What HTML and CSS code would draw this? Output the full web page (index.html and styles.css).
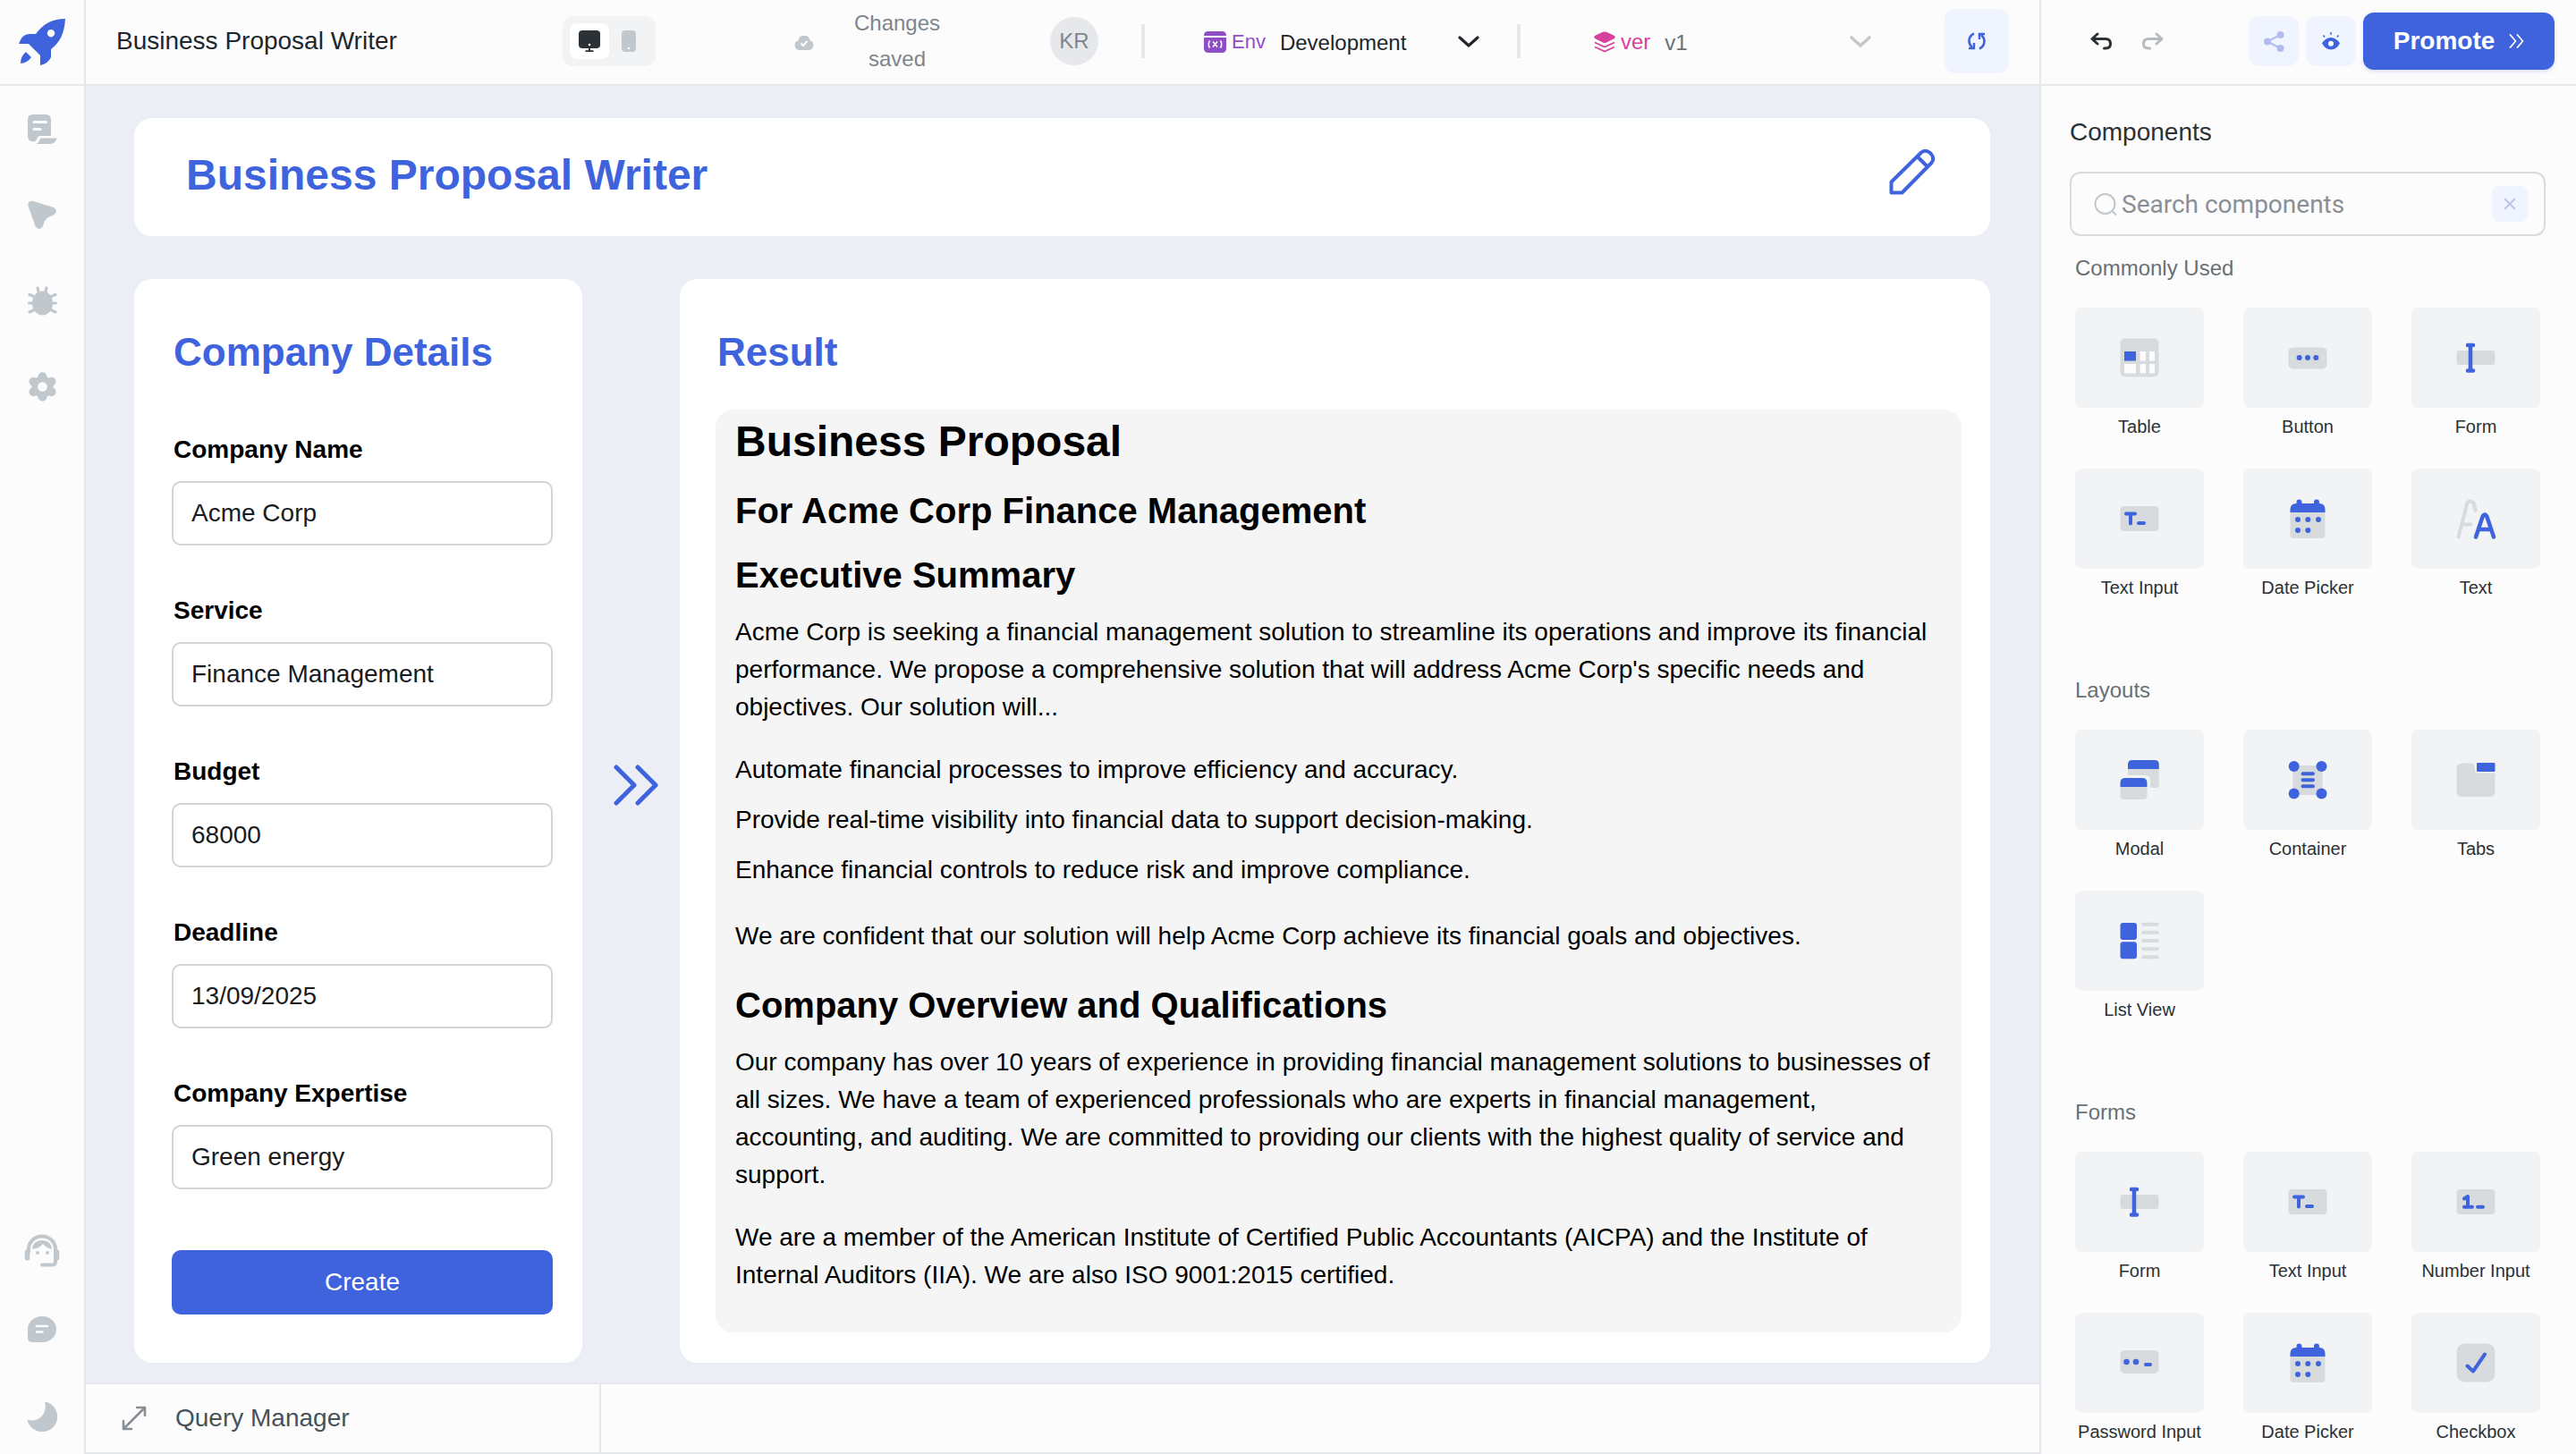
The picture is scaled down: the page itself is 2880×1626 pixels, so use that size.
FILE: index.html
```html
<!DOCTYPE html>
<html lang="en">
<head>
<meta charset="utf-8">
<meta name="viewport" content="width=device-width, initial-scale=1">
<title>Business Proposal Writer</title>
<link rel="stylesheet" href="styles.css">
</head>
<body>
<svg class="sprite" aria-hidden="true">
  <symbol id="c-table" viewBox="0 0 48 48"><rect class="g" x="2.5" y="2.5" width="43" height="43" rx="5"/><path class="w" d="M7 31h13v10.500H7zM24.500 17H31v10.500h-6.500zM35 17h6v10.500h-6zM24.500 31H31v10.500h-6.500zM35 31h6v10.500h-6z"/><rect class="b" x="7" y="17" width="13" height="10.500"/></symbol>
  <symbol id="c-button" viewBox="0 0 48 48"><rect class="g" x="2.500" y="12.500" width="43" height="24" rx="5"/><circle class="b" cx="14.700" cy="24" r="3"/><circle class="b" cx="24" cy="24" r="3"/><circle class="b" cx="33.300" cy="24" r="3"/></symbol>
  <symbol id="c-form" viewBox="0 0 48 48"><rect class="g" x="2.500" y="16" width="43" height="16" rx="3"/><path class="l" d="M18 10v28M15 10h6M15 38.500h6"/></symbol>
  <symbol id="c-input" viewBox="0 0 48 48"><rect class="g" x="2.500" y="10" width="43" height="28" rx="4"/><path class="l n" d="M9 18.500h10M14 18.500v11M23 29h6"/></symbol>
  <symbol id="c-number" viewBox="0 0 48 48"><rect class="g" x="2.500" y="10" width="43" height="28" rx="4"/><path class="l n" d="M11 20.500l4-2.500v11.500M11 29.800h9M26 29.800h6"/></symbol>
  <symbol id="c-password" viewBox="0 0 48 48"><rect class="g" x="2.500" y="10" width="43" height="26" rx="5"/><circle class="b" cx="9.500" cy="23" r="3.300"/><circle class="b" cx="20" cy="23" r="3.300"/><path class="l n" d="M31 26h5"/></symbol>
  <symbol id="c-date" viewBox="0 0 48 48"><rect class="g" x="4.500" y="12" width="39" height="34" rx="4"/><path class="b" d="M4.500 17v-3q0-7 7-7V5.500a3 3 0 0 1 6 0V7h13.500V5.500a3 3 0 0 1 6 0V7q6.500 0 6.500 7v3z"/><circle class="b" cx="13" cy="25" r="3"/><circle class="b" cx="24.300" cy="25" r="3"/><circle class="b" cx="36" cy="25" r="3"/><circle class="b" cx="13" cy="37" r="3"/><circle class="b" cx="24.300" cy="37" r="3"/></symbol>
  <symbol id="c-text" viewBox="0 0 48 48"><path class="gl" d="M4.500 44.500L14 8q1-3.500 4-3.500t4 3.500l1.500 7M9.500 30.500h9"/><path class="l" d="M24 44.500L31.500 22q2.500-5 5 0L44 44.500M28 36h12"/></symbol>
  <symbol id="c-modal" viewBox="0 0 48 48"><path class="g" d="M11 12h34.800v18q0 3-3 3H36V25q0-6-6-6H11z"/><path class="b" d="M11 12V7q0-5 5-5h25q4.800 0 4.800 5v5z"/><path class="g" d="M2.500 32h30v10q0 4-4 4h-22q-4 0-4-4z"/><path class="b" d="M2.500 32v-4.500Q2.500 22 8 22h19q5.500 0 5.500 5.500V32z"/></symbol>
  <symbol id="c-container" viewBox="0 0 48 48"><rect class="g" x="7.500" y="8" width="33" height="33" rx="2"/><circle class="b" cx="8.700" cy="9" r="6"/><circle class="b" cx="39.500" cy="9" r="6"/><circle class="b" cx="8.700" cy="39.500" r="6"/><circle class="b" cx="39.500" cy="39.500" r="6"/><path class="l n" d="M18.500 17.200h11.500M18.500 24.200h11.500M18.500 31.200h11.500"/></symbol>
  <symbol id="c-tabs" viewBox="0 0 48 48"><path class="g" d="M9 5.500h10q3 0 3.500 3l.5 5q.5 3 3.500 3h19V37q0 6-6 6H9q-6.500 0-6.500-6V12q0-6.500 6.500-6.500z"/><rect class="b" x="25" y="5" width="20.500" height="10" rx="1"/></symbol>
  <symbol id="c-list" viewBox="0 0 48 48"><rect class="b" x="2.500" y="4" width="18.500" height="19" rx="3"/><rect class="b" x="2.500" y="25.300" width="18.500" height="19" rx="3"/><path class="gl" d="M28 5.700h16M28 14.800h16M28 24h16M28 33.200h16M28 42.300h16"/></symbol>
  <symbol id="c-check" viewBox="0 0 48 48"><rect class="g" x="2.500" y="2.500" width="43" height="43" rx="9"/><path class="l n" d="M14.500 27.500l6.500 6L34 14.500"/></symbol>
</svg>

<div class="app">
  <aside class="sidebar">
    <a class="logo" href="#" aria-label="Home">
      <svg width="52" height="52" viewBox="0 0 52 52"><path fill="#3e63dd" fill-rule="evenodd" d="M52 0C51 17 46 26 36 34V43Q33 50 24 52V41L11 28H0Q4 16 13 17H19C28 5 38 0 52 0ZM36 12a4.200 4.200 0 1 0 .1 0ZM8 37L14 43Q10 49 2 50Q2 42 8 37Z"/></svg>
    </a>
    <nav class="tools">
      <button type="button" aria-label="Pages"><svg width="33" height="33" viewBox="0 0 33 33" fill="#c1c8cd"><path d="M6 0H20Q26 0 26 6V24H14Q11.500 24 10.500 27Q9 30.500 6 30.500Q0 30 0 24V6Q0 0 6 0Z"/><path d="M15 26.500H32.500Q31 33 25 33H9.500Q13 31 13.500 28Q14 26.500 15 26.500Z"/><path d="M7 8.500H20.500M7 16.500H14" stroke="#fcfcfd" stroke-width="3" stroke-linecap="round"/></svg></button>
      <button type="button" aria-label="Inspector"><svg width="33" height="33" viewBox="0 0 33 33" fill="#c1c8cd"><path d="M5.500 .7L29 8Q35 12 29 16.500L23 19Q19.500 21 18.500 24L17 29Q12.500 35 8.500 29L.4 6Q0 0 5.500 .7Z"/></svg></button>
      <button type="button" aria-label="Debugger"><svg width="33" height="33" viewBox="0 0 33 33" fill="none" stroke="#c1c8cd" stroke-width="3.200" stroke-linecap="round"><path d="M11 2L12.500 8M21 2L19.500 8M2 9.500L8 12M31 9.500L25 12M1.600 19H31.400M2 29L8 26M31 29L25 26"/><ellipse cx="16.500" cy="19" rx="11.500" ry="13.500" fill="#c1c8cd" stroke="none"/></svg></button>
      <button type="button" aria-label="Settings"><svg width="33" height="33" viewBox="0 0 33 33"><g stroke="#c1c8cd" stroke-width="10" stroke-linecap="round"><path d="M16.500 5.300V27.700M6.500 10.800L26.500 22.200M26.500 10.800L6.500 22.200"/></g><circle cx="16.500" cy="16.500" r="12" fill="#c1c8cd"/><circle cx="16.500" cy="16.500" r="5.300" fill="#fcfcfd"/></svg></button>
    </nav>
    <div class="tools tools-bottom">
      <button type="button" aria-label="Support"><svg width="40" height="37" viewBox="0 0 40 37" fill="none" stroke="#c1c8cd" stroke-linecap="round"><path stroke-width="4" d="M5 20V17A15 14.500 0 0 1 35 17V31Q35 34.500 31 34.500H20"/><path stroke-width="5.500" d="M3.500 20V27M36.500 20V27"/><path fill="#c1c8cd" stroke="none" d="M9 17Q10 7 20 7Q30 7 31 17Q25 16 21 11Q17 16 9 17Z"/><circle cx="15" cy="21" r="2" fill="#c1c8cd" stroke="none"/><circle cx="26" cy="21" r="2" fill="#c1c8cd" stroke="none"/></svg></button>
      <button type="button" aria-label="Comments"><svg width="32" height="29" viewBox="0 0 32 29"><path fill="#c1c8cd" d="M16.500 0A15.500 14.500 0 0 1 16.500 29H5Q0 29 0 24V14.500A16 14.500 0 0 1 16.500 0Z"/><path d="M10 11H22M10 17.500H16.500" stroke="#fcfcfd" stroke-width="2.600" stroke-linecap="round"/></svg></button>
      <button type="button" class="theme" aria-label="Dark mode"><svg width="34" height="34" viewBox="0 0 34 34"><path fill="#c1c8cd" d="M20 .5A17 17 0 1 1 .5 20.500C12 25 24 14 20 .5Z"/></svg></button>
    </div>
  </aside>

  <main class="main">
    <header class="topbar">
      <div class="app-name">Business Proposal Writer</div>
      <div class="device">
        <button type="button" class="on" aria-label="Desktop"><svg width="24" height="24" viewBox="0 0 24 24" fill="#2b3134"><rect width="24" height="20" rx="4"/><path d="M11 19h2v4h-2zM7.500 22.300h9V24h-9z"/><circle cx="12" cy="16" r="1.300" fill="#fff"/></svg></button>
        <button type="button" aria-label="Mobile"><svg width="16" height="24" viewBox="0 0 16 24"><rect width="16" height="24" rx="4" fill="#c1c8cd"/><circle cx="8" cy="20" r="1.300" fill="#fff"/></svg></button>
      </div>
      <div class="status">
        <svg width="22" height="19" viewBox="0 0 22 19"><path fill="#c1c8cd" d="M5.500 19A5.500 5.500 0 0 1 4.500 8.300A6.600 6.600 0 0 1 17.500 8.300A5.500 5.500 0 0 1 16.500 19Z"/><path d="M7.500 11.500L10 14L14.500 9" fill="none" stroke="#fff" stroke-width="2"/></svg>
        <span>Changes saved</span>
      </div>
      <div class="avatar">KR</div>
      <div class="sep"></div>
      <div class="picker env">
        <svg width="25" height="24" viewBox="0 0 25 24"><path fill="#8e4ec6" d="M0 5Q0 0 5 0H20Q25 0 25 5ZM0 7H25V19Q25 24 20 24H5Q0 24 0 19Z"/><path d="M6.500 10.500Q4 14.500 6.500 18.500M18.500 10.500Q21 14.500 18.500 18.500M10 11.500L15 17.500M15 11.500L10 17.500" fill="none" stroke="#fff" stroke-width="1.600"/></svg>
        <label for="env">Env</label>
        <select id="env"><option>Development</option></select>
        <svg class="caret" width="24" height="14" viewBox="0 0 24 14"><path d="M2 2L12 11L22 2" fill="none" stroke="#20262a" stroke-width="3.200" stroke-linecap="round" stroke-linejoin="round"/></svg>
      </div>
      <div class="sep"></div>
      <div class="picker ver">
        <svg width="24" height="24" viewBox="0 0 24 24"><path fill="#d6409f" d="M10 .8Q12 0 14 .8L23 5Q24.500 6.500 23 8L14 12.500Q12 13.500 10 12.500L1 8Q-.5 6.500 1 5Z"/><path d="M1 12.500L12 17.500L23 12.500M1 17.500L12 22.500L23 17.500" fill="none" stroke="#d6409f" stroke-width="1.800"/></svg>
        <label for="ver">ver</label>
        <select id="ver"><option>v1</option></select>
        <svg class="caret" width="24" height="14" viewBox="0 0 24 14"><path d="M2 2L12 11L22 2" fill="none" stroke="#c4c8ca" stroke-width="3.600" stroke-linecap="round" stroke-linejoin="round"/></svg>
      </div>
      <button type="button" class="refresh" aria-label="Refresh"><svg width="20" height="20" viewBox="0 0 20 20" fill="none" stroke="#3e63dd" stroke-width="2.600"><path d="M7 1.500Q1.500 4 1.500 10Q1.500 14 5 17M13 18.500Q18.500 16 18.500 10Q18.500 6 15 3"/><path d="M1 18H7V12M19 2H13V8" stroke-width="2.400"/></svg></button>
    </header>

    <section class="canvas">
      <div class="card banner">
        <h1>Business Proposal Writer</h1>
        <svg width="52" height="52" viewBox="0 0 52 52" fill="none" stroke="#3e63dd" stroke-width="4" stroke-linejoin="round"><path d="M2.500 49.500V37.500L36 4.500Q41 .5 46.500 5.500Q51.500 11 47.500 16L14.500 49.500ZM31.500 9L43 20.500"/></svg>
      </div>

      <div class="columns">
        <form class="card details">
          <h2>Company Details</h2>
          <div class="field"><label for="f1">Company Name</label><input id="f1" type="text" value="Acme Corp"></div>
          <div class="field"><label for="f2">Service</label><input id="f2" type="text" value="Finance Management"></div>
          <div class="field"><label for="f3">Budget</label><input id="f3" type="text" value="68000"></div>
          <div class="field"><label for="f4">Deadline</label><input id="f4" type="text" value="13/09/2025"></div>
          <div class="field"><label for="f5">Company Expertise</label><input id="f5" type="text" value="Green energy"></div>
          <button type="button" class="create">Create</button>
        </form>

        <div class="arrow">
          <svg width="50" height="46" viewBox="0 0 50 46" fill="none" stroke="#3e63dd" stroke-width="5" stroke-linecap="round" stroke-linejoin="round"><path d="M3 3L23 23L3 43M27 3L47 23L27 43"/></svg>
        </div>

        <div class="card result">
          <h2>Result</h2>
          <article class="doc">
            <h3 class="doc-title">Business Proposal</h3>
            <h4>For Acme Corp Finance Management</h4>
            <h4>Executive Summary</h4>
            <p>Acme Corp is seeking a financial management solution to streamline its operations and improve its financial performance. We propose a comprehensive solution that will address Acme Corp's specific needs and objectives. Our solution will...</p>
            <ul>
              <li>Automate financial processes to improve efficiency and accuracy.</li>
              <li>Provide real-time visibility into financial data to support decision-making.</li>
              <li>Enhance financial controls to reduce risk and improve compliance.</li>
            </ul>
            <p>We are confident that our solution will help Acme Corp achieve its financial goals and objectives.</p>
            <h4 class="next">Company Overview and Qualifications</h4>
            <p>Our company has over 10 years of experience in providing financial management solutions to businesses of all sizes. We have a team of experienced professionals who are experts in financial management, accounting, and auditing. We are committed to providing our clients with the highest quality of service and support.</p>
            <p>We are a member of the American Institute of Certified Public Accountants (AICPA) and the Institute of Internal Auditors (IIA). We are also ISO 9001:2015 certified.</p>
          </article>
        </div>
      </div>
    </section>

    <footer class="query">
      <button type="button" class="query-toggle">
        <svg width="28" height="28" viewBox="0 0 28 28" fill="none" stroke="#889096" stroke-width="2.600" stroke-linecap="round" stroke-linejoin="round"><path d="M2 26L26 2M17 2H26V11M2 17V26H11"/></svg>
        <span>Query Manager</span>
      </button>
    </footer>
  </main>

  <aside class="panel">
    <div class="actions">
      <button type="button" class="plain" aria-label="Undo"><svg width="24" height="20" viewBox="0 0 24 20" fill="none" stroke="#2b3134" stroke-width="3" stroke-linecap="round" stroke-linejoin="round"><path d="M8 2L2 7.500L8 13M2.500 7.500H17Q22.500 7.500 22.500 13Q22.500 18 17 18H15.500"/></svg></button>
      <button type="button" class="plain" aria-label="Redo"><svg width="24" height="20" viewBox="0 0 24 20" fill="none" stroke="#b4babd" stroke-width="3" stroke-linecap="round" stroke-linejoin="round"><path d="M16 2L22 7.500L16 13M21.500 7.500H7Q1.500 7.500 1.500 13Q1.500 18 7 18H8.500"/></svg></button>
      <div class="main-actions">
        <button type="button" class="soft" aria-label="Share"><svg width="23" height="23" viewBox="0 0 23 23" fill="#b1bbf0" stroke="#b1bbf0" stroke-width="2"><path d="M4 11.500L18.500 4M4 11.500L18.500 19"/><circle cx="4" cy="11.500" r="3"/><circle cx="18.500" cy="4" r="3"/><circle cx="18.500" cy="19" r="3"/></svg></button>
        <button type="button" class="soft" aria-label="Preview"><svg width="20" height="20" viewBox="0 0 20 20"><path fill="#3e63dd" d="M0 12.500Q4 6 10 6T20 12.500Q16 19.500 10 19.500T0 12.500Z"/><circle cx="10" cy="12.800" r="3" fill="#fff"/><path d="M10 0V3M1.500 3.500L3 5.500M18.500 3.500L17 5.500" stroke="#3e63dd" stroke-width="1.400"/></svg></button>
        <button type="button" class="promote">Promote <svg width="17" height="16" viewBox="0 0 17 16" fill="none" stroke="#fff" stroke-width="1.800" stroke-linecap="round" stroke-linejoin="round"><path d="M1.500 1L7.500 8L1.500 15M9.500 1L15.500 8L9.500 15"/></svg></button>
      </div>
    </div>

    <div class="library">
      <h2>Components</h2>
      <div class="search">
        <svg width="26" height="25" viewBox="0 0 26 25" fill="none" stroke="#c1c8cd" stroke-width="2"><circle cx="12.500" cy="12" r="11"/><path d="M20.500 20L25 24.500"/></svg>
        <input type="text" placeholder="Search components" aria-label="Search components">
        <button type="button" aria-label="Clear"><svg width="14" height="14" viewBox="0 0 14 14"><path d="M1 1L13 13M13 1L1 13" stroke="#b9c3e6" stroke-width="1.800"/></svg></button>
      </div>

      <section class="group">
        <h3>Commonly Used</h3>
        <div class="tiles">
          <button type="button" class="tile"><span><svg><use href="#c-table"/></svg></span>Table</button>
          <button type="button" class="tile"><span><svg><use href="#c-button"/></svg></span>Button</button>
          <button type="button" class="tile"><span><svg><use href="#c-form"/></svg></span>Form</button>
          <button type="button" class="tile"><span><svg><use href="#c-input"/></svg></span>Text Input</button>
          <button type="button" class="tile"><span><svg><use href="#c-date"/></svg></span>Date Picker</button>
          <button type="button" class="tile"><span><svg><use href="#c-text"/></svg></span>Text</button>
        </div>
      </section>

      <section class="group">
        <h3>Layouts</h3>
        <div class="tiles">
          <button type="button" class="tile"><span><svg><use href="#c-modal"/></svg></span>Modal</button>
          <button type="button" class="tile"><span><svg><use href="#c-container"/></svg></span>Container</button>
          <button type="button" class="tile"><span><svg><use href="#c-tabs"/></svg></span>Tabs</button>
          <button type="button" class="tile"><span><svg><use href="#c-list"/></svg></span>List View</button>
        </div>
      </section>

      <section class="group">
        <h3>Forms</h3>
        <div class="tiles">
          <button type="button" class="tile"><span><svg><use href="#c-form"/></svg></span>Form</button>
          <button type="button" class="tile"><span><svg><use href="#c-input"/></svg></span>Text Input</button>
          <button type="button" class="tile"><span><svg><use href="#c-number"/></svg></span>Number Input</button>
          <button type="button" class="tile"><span><svg><use href="#c-password"/></svg></span>Password Input</button>
          <button type="button" class="tile"><span><svg><use href="#c-date"/></svg></span>Date Picker</button>
          <button type="button" class="tile"><span><svg><use href="#c-check"/></svg></span>Checkbox</button>
        </div>
      </section>
    </div>
  </aside>
</div>
</body>
</html>
```

FILE: styles.css
```css
:root {
  --blue: #3e63dd;
  --line: #e6e8eb;
  --surface: #fcfcfd;
  --canvas: #ebeef5;
  --soft: #f0f4ff;
}

*, *::before, *::after { box-sizing: border-box; }

body {
  margin: 0;
  font-family: "Liberation Sans", Arial, sans-serif;
  font-size: 28px;
  color: #000;
  background: var(--surface);
}

h1, h2, h3, h4, p, ul { margin: 0; padding: 0; }
ul { list-style: none; }
svg { display: block; flex: none; }

button, input, select {
  font: inherit;
  color: inherit;
  border: 0;
  padding: 0;
  margin: 0;
  background: none;
}

.sprite { position: absolute; width: 0; height: 0; }

.app {
  display: grid;
  grid-template-columns: 96px minmax(0, 1fr) 600px;
  min-height: 100vh;
}

/* Left tool rail */
.sidebar {
  display: flex;
  flex-direction: column;
  border-right: 2px solid var(--line);
}
.logo {
  display: flex;
  align-items: center;
  justify-content: center;
  height: 96px;
  border-bottom: 2px solid var(--line);
}
.tools { display: flex; flex-direction: column; }
.tools button {
  display: flex;
  align-items: center;
  justify-content: center;
  height: 96px;
}
.tools-bottom { margin-top: auto; }
.tools-bottom button { height: 88px; }
.tools-bottom .theme { height: 84px; margin-top: 12px; }

/* Top bar */
.main { display: flex; flex-direction: column; }
.topbar {
  display: flex;
  align-items: center;
  height: 96px;
  padding: 0 34px 2px 34px;
  border-bottom: 2px solid var(--line);
  font-size: 24px;
}
.app-name { flex: 1; font-size: 28px; color: #20262a; white-space: nowrap; }
.device {
  display: flex;
  align-items: center;
  width: 104px;
  height: 56px;
  padding: 8px;
  border-radius: 12px;
  background: #f1f3f4;
}
.device button {
  display: flex;
  align-items: center;
  justify-content: center;
  width: 44px;
  height: 40px;
  border-radius: 8px;
}
.device .on { background: #fff; }
.status {
  display: flex;
  align-items: center;
  gap: 40px;
  margin: 0 118px 0 155px;
  color: #7e868c;
}
.status span { width: 106px; line-height: 40px; text-align: center; }
.avatar {
  width: 54px;
  height: 54px;
  margin-right: 48px;
  border-radius: 50%;
  background: var(--line);
  color: #7e868c;
  line-height: 54px;
  text-align: center;
}
.sep { width: 4px; height: 38px; background: var(--line); }
.picker { display: flex; align-items: center; padding-top: 2px; }
.picker label { margin: 0 16px 0 6px; }
.picker select { appearance: none; flex: 1; height: 40px; }
.env { width: 308px; margin: 0 42px 0 66px; }
.env label { font-size: 22px; color: #8e4ec6; }
.env select { color: #20262a; }
.ver { width: 310px; margin: 0 82px; }
.ver label { color: #d6409f; }
.ver select { color: #687076; }
.caret { pointer-events: none; }
.refresh {
  display: flex;
  align-items: center;
  justify-content: center;
  width: 72px;
  height: 72px;
  border-radius: 12px;
  background: var(--soft);
}

/* App canvas */
.canvas {
  flex: 1;
  display: flex;
  flex-direction: column;
  gap: 48px;
  padding: 36px 55px 22px 54px;
  background: var(--canvas);
}
.card { border-radius: 20px; background: #fff; }
.card h1, .card h2 { color: var(--blue); }
.card h2 { padding-left: 2px; font-size: 44px; line-height: 52px; }
.banner {
  display: flex;
  justify-content: space-between;
  align-items: flex-start;
  height: 132px;
  padding: 34px 61px 0 58px;
}
.banner h1 { font-size: 48px; line-height: 60px; }
.columns {
  flex: 1;
  display: grid;
  grid-template-columns: 501px 109px minmax(0, 1fr);
}
.details {
  display: flex;
  flex-direction: column;
  padding: 56px 33px 54px 42px;
}
.details h2 { margin-bottom: 67px; }
.field { display: flex; flex-direction: column; margin-bottom: 57px; }
.field label { margin-bottom: 19px; padding-left: 2px; font-weight: bold; line-height: 32px; }
.field input {
  width: 100%;
  height: 72px;
  padding: 0 20px;
  border: 2px solid #d0d4d8;
  border-radius: 10px;
  color: #181c1f;
}
.create {
  height: 72px;
  margin-top: 11px;
  border-radius: 10px;
  background: var(--blue);
  color: #fff;
}
.arrow { padding: 543px 0 0 35px; }
.result {
  display: flex;
  flex-direction: column;
  gap: 38px;
  padding: 56px 32px 34px 40px;
}
.doc {
  flex: 1;
  padding: 7px 16px 7px 22px;
  border-radius: 20px;
  background: #f5f5f5;
  line-height: 42px;
}
.doc-title { font-size: 48px; line-height: 58px; }
.doc h4 { margin-top: 24px; font-size: 40px; line-height: 48px; }
.doc h4.next { margin-top: 32px; }
.doc h4 + p { margin-top: 19px; }
.doc p + p, .doc ul { margin-top: 28px; }
.doc li + li { margin-top: 14px; }
.doc ul + p { margin-top: 32px; }

/* Query manager strip */
.query {
  display: flex;
  height: 80px;
  border-top: 2px solid var(--line);
  border-bottom: 2px solid var(--line);
}
.query-toggle {
  display: flex;
  align-items: center;
  gap: 32px;
  width: 576px;
  padding-left: 40px;
  border-right: 2px solid var(--line);
  color: #46535a;
}

/* Right panel */
.panel { border-left: 2px solid var(--line); }
.actions {
  display: flex;
  align-items: center;
  gap: 34px;
  height: 96px;
  padding: 0 24px 2px 55px;
  border-bottom: 2px solid var(--line);
}
.main-actions { display: flex; align-items: center; gap: 8px; margin-left: auto; }
.soft {
  display: flex;
  align-items: center;
  justify-content: center;
  width: 56px;
  height: 56px;
  border-radius: 12px;
  background: var(--soft);
}
.promote {
  display: flex;
  align-items: center;
  justify-content: center;
  gap: 16px;
  width: 214px;
  height: 64px;
  border-radius: 12px;
  background: var(--blue);
  box-shadow: 0 2px 4px #3e63dd33;
  color: #fff;
  font-weight: bold;
}
.library { padding: 36px 34px 0 32px; }
.library h2 { font-size: 28px; font-weight: normal; line-height: 32px; color: #2b3134; }
.search {
  display: flex;
  align-items: center;
  gap: 5px;
  height: 72px;
  margin: 28px 0 20px;
  padding: 0 18px 0 25px;
  border: 2px solid #d7dbdf;
  border-radius: 12px;
}
.search input {
  flex: 1;
  min-width: 0;
  height: 60px;
  font-family: Roboto, "Liberation Sans", sans-serif;
}
.search input::placeholder { color: #889096; opacity: 1; }
.search button {
  display: flex;
  align-items: center;
  justify-content: center;
  width: 40px;
  height: 40px;
  border-radius: 8px;
  background: var(--soft);
}
.group { padding: 0 6px; }
.group + .group { margin-top: 86px; }
.group h3 { margin-bottom: 28px; font-size: 24px; font-weight: normal; line-height: 32px; color: #687076; }
.tiles { display: grid; grid-template-columns: repeat(3, minmax(0, 1fr)); gap: 34px 44px; }
.tile {
  display: flex;
  flex-direction: column;
  align-items: center;
  gap: 8px;
  font-size: 20px;
  line-height: 26px;
  text-align: center;
  white-space: nowrap;
  color: #2b3134;
}
.tile span {
  display: flex;
  align-items: center;
  justify-content: center;
  width: 100%;
  height: 112px;
  border-radius: 8px;
  background: #f1f3f5;
}
.tile svg { width: 48px; height: 48px; }

.g { fill: #d7dbde; }
.w { fill: #fcfcfd; }
.b { fill: var(--blue); }
.l, .gl { fill: none; stroke-linecap: round; stroke-linejoin: round; stroke-width: 4.500px; stroke: var(--blue); }
.gl { stroke: #d7dbde; stroke-width: 4px; }
.n { stroke-width: 4px; }
```
